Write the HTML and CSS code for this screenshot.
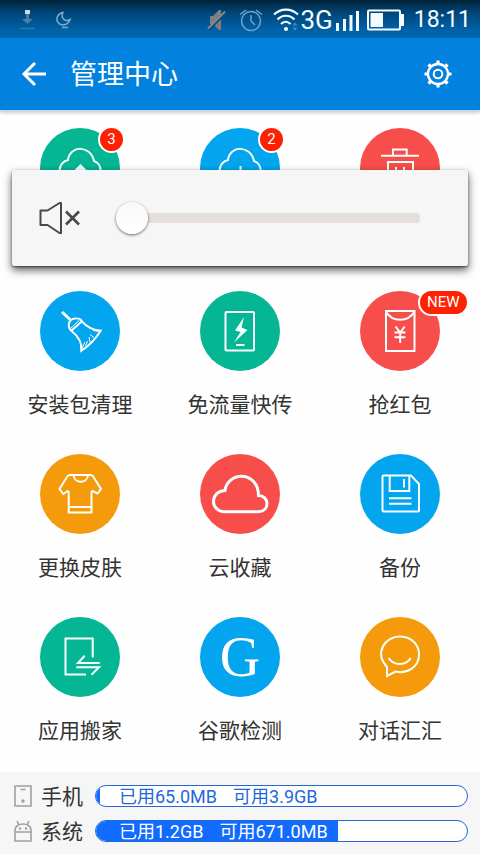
FILE: index.html
```html
<!DOCTYPE html>
<html lang="zh-CN">
<head>
<meta charset="utf-8">
<meta name="viewport" content="width=device-width, initial-scale=1">
<title>管理中心</title>
<link rel="stylesheet" href="styles.css">
</head>
<body>
<div class="status">
  <div class="status-left">
    <svg width="16" height="22" viewBox="0 0 16 22"><path d="M5 1h5v4H5z" fill="#c5dbe9"/><path d="M6 5h3v5h4l-5.500 5L2 10h4z" fill="#4680a6"/><path d="M0 19.500h15" stroke="#2379b2" stroke-width="1.500"/></svg>
    <svg width="16" height="22" viewBox="0 0 16 22" fill="none" stroke="#7fabca" stroke-width="1.500"><path d="M7 3.500C1.500 4.500-.5 10 2 13.500c3 4 10 3 12-3-4 2.500-10-.5-7-7zM6 18.500h6"/></svg>
  </div>
  <svg class="mute" width="20" height="24" viewBox="0 0 20 24"><path d="M3 8h3l6-6h2v20h-2l-6-6H3z" fill="#7d7f82"/><path d="M2 22L18.500 5.500" stroke="#064e86" stroke-width="2"/><path d="M1 20.500L18 3.500" stroke="#8b8987" stroke-width="1.800"/></svg>
  <svg class="alarm" width="24" height="24" viewBox="0 0 24 24" fill="none" stroke="#6fa3c9" stroke-width="1.500"><circle cx="12" cy="13" r="9.500"/><path d="M12 7v6l4 4M1 6.500L7 2M17 2l6 4.500"/></svg>
  <svg class="wifi" width="26" height="26" viewBox="0 0 26 26" fill="none" stroke="#f4fbff" stroke-width="2.200"><path d="M1 7.500C8 1 18 1 25 7.500M4.500 12.500c5-5 12-5 17 0M8 17c3-3 6.500-3 9.500 0"/><circle cx="13" cy="22" r="2" fill="#fff" stroke="none"/><path d="M19.500 18.500h5L22 15.500zM19.500 20.500h5L22 23.500z" fill="#4689b9" stroke="none"/></svg>
  <span class="network">3G</span>
  <svg class="signal" width="24" height="24" viewBox="0 0 24 24" fill="#f4fbff"><path d="M0 15h3v8H0zM7 11h3v12H7zM13.500 7h3v16h-3zM20 3h3v20h-3z"/></svg>
  <svg class="battery" width="38" height="22" viewBox="0 0 38 22"><rect x="1" y="1.500" width="32" height="19" rx="1" fill="none" stroke="#f4fbff" stroke-width="2"/><path d="M3.500 4H16v14H3.500zM34 5h3v12h-3z" fill="#f4fbff"/></svg>
  <time class="clock">18:11</time>
</div>

<header class="bar">
  <button class="icon-button" aria-label="返回"><svg width="26" height="26" viewBox="0 0 26 26" fill="none" stroke="#fff" stroke-width="3"><path d="M25 13H3M14 2L3 13l11 11"/></svg></button>
  <h1>管理中心</h1>
  <button class="icon-button" aria-label="设置"><svg width="28" height="28" viewBox="-14 -14 28 28" fill="none" stroke="#fff"><circle r="10" stroke-width="2.300"/><circle r="4.300" stroke-width="2"/><path stroke-width="3.200" d="M0-13.500v3M0 10.500v3M-13.500 0h3M10.500 0h3M-9.500-9.500l2 2M7.500 7.500l2 2M9.500-9.500l-2 2M-7.500 7.500l-2 2"/></svg></button>
</header>

<main class="grid">
  <button class="tile" aria-label="上传">
    <span class="disc green"><svg viewBox="0 0 80 80"><path d="M27 52c-10-1-10-18 1-20C30 17 51 17 54 33c9 3 9 18-1 19z"/><path class="solid" d="M40.500 36l7 7h-14z"/></svg><span class="badge">3</span></span>
  </button>
  <button class="tile" aria-label="下载">
    <span class="disc blue"><svg viewBox="0 0 80 80"><path d="M27 52c-10-1-10-18 1-20C30 17 51 17 54 33c9 3 9 18-1 19zM40.500 38v14"/></svg><span class="badge">2</span></span>
  </button>
  <button class="tile" aria-label="回收站">
    <span class="disc red"><svg viewBox="0 0 80 80"><path d="M21 27.700h38M33 27v-5.500h13.700V27M28 60V34h25v26zM36 39v15M44 39v15"/></svg></span>
  </button>

  <button class="tile">
    <span class="disc blue"><svg viewBox="0 0 80 80"><path class="thick" d="M22 21l8 7.500"/><path d="M31.300 39.700C27 35.500 28.500 29 33.500 27.700c4-.9 7.500.3 8.500 2.600zM42 30.300c4 5 10 8.500 18.700 9.400-5 8-11.500 15-19.400 20 1-8-3-14.500-10-20z"/><path class="fine" d="M31 37L39.500 29M42 57l3-6M45.500 55l2-5M50 51l-1-5M54 46.500l-4-3M59 40.500l-6-1"/></svg></span>
    <span class="label">安装包清理</span>
  </button>
  <button class="tile">
    <span class="disc green"><svg viewBox="0 0 80 80"><rect x="25.500" y="21" width="28.500" height="38.500" rx="1"/><path class="solid" d="M44 26l-9 13.500 5.500 1.500L34 51.500 47.500 39l-6-2.500z"/><path d="M36 54h8.500"/></svg></span>
    <span class="label">免流量快传</span>
  </button>
  <button class="tile">
    <span class="disc red"><svg viewBox="0 0 80 80"><path d="M26 20h28.500v40H26zM26 20.500c6 11 22 11 28.500 0M35.500 35.500l4.700 6 4.500-6M34.500 41.500h11M34.500 46.200h11M40.200 41v11"/></svg><span class="badge">NEW</span></span>
    <span class="label">抢红包</span>
  </button>

  <button class="tile">
    <span class="disc orange"><svg viewBox="0 0 80 80"><path d="M30 21h20.500q2 0 3 2L61 35l-3.500 4.500-5-2.500-1 1v20.500H28.700V38l-1-1-4.500 3L19.500 35 27 23q1-2 3-2zM33.500 21c1 9 13.500 9 14.500 0M29 53h22.500"/></svg></span>
    <span class="label">更换皮肤</span>
  </button>
  <button class="tile">
    <span class="disc red"><svg viewBox="0 0 80 80"><path class="thick" d="M24.500 57.700C18 57.700 13.500 53 13.500 47.500 13.500 41 18.500 36.700 25 36.500 26 28.500 33 22.300 41.500 22.300 51 22.300 58.500 30 58.500 41.500 63.500 41.500 67 45 67 49.500c0 5-3.500 8.200-9 8.200z"/></svg></span>
    <span class="label">云收藏</span>
  </button>
  <button class="tile">
    <span class="disc blue"><svg viewBox="0 0 80 80"><path d="M23.500 21.500H51l8 8.500v26.500q0 1-1 1H23.500q-1 0-1-1v-34q0-1 1-1zM29.700 21.500V37h19.600V21.500M44 25v8.500M29 44.300h22.500M29 49.700h22.500"/></svg></span>
    <span class="label">备份</span>
  </button>

  <button class="tile">
    <span class="disc green"><svg viewBox="0 0 80 80"><path d="M52.700 40.500V21.500H25.500v36h20.500M44.700 38.700L38 46h21.700M36.300 50.300H59l-7.500 7.400"/></svg></span>
    <span class="label">应用搬家</span>
  </button>
  <button class="tile">
    <span class="disc blue"><span class="letter">G</span></span>
    <span class="label">谷歌检测</span>
  </button>
  <button class="tile">
    <span class="disc orange"><svg viewBox="0 0 80 80"><path d="M27 59V50C14 36 25 19 40.300 19.500 53 20 59.500 29 59 38.500 58.500 50 47 57.500 35.500 54.500zM28.700 41c4.500 8 17.500 8 22 0"/></svg></span>
    <span class="label">对话汇汇</span>
  </button>
</main>

<footer class="storage">
  <div class="row">
    <svg width="18" height="22" viewBox="0 0 18 22" fill="none" stroke="#a0a0a0" stroke-width="1.600"><path d="M1 1h16v20H1zM6.500 4.500h5"/><circle cx="9" cy="16" r="1.700" fill="#a0a0a0" stroke="none"/></svg>
    <span class="name">手机</span>
    <div class="meter"><div class="fill" style="width:1%"></div><span class="usage"><span>已用65.0MB</span><span>可用3.9GB</span></span></div>
  </div>
  <div class="row">
    <svg width="18" height="22" viewBox="0 0 18 22" fill="none" stroke="#a0a0a0" stroke-width="1.600"><path d="M1 12v-2C1 2 17 2 17 10v11H1zM1 12h16M3 1l2 4M15 1l-2 4"/><circle cx="6" cy="8.500" r="1.200" fill="#a0a0a0" stroke="none"/><circle cx="12" cy="8.500" r="1.200" fill="#a0a0a0" stroke="none"/></svg>
    <span class="name">系统</span>
    <div class="meter"><div class="fill" style="width:65.3%"></div><span class="usage light"><span>已用1.2GB</span><span>可用671.0MB</span></span></div>
  </div>
</footer>

<div class="volume">
  <svg width="42" height="32" viewBox="0 0 42 32" fill="none" stroke="#484848" stroke-width="2" stroke-linejoin="round"><path d="M1.500 8.500h7l12-7.500h1.500v30h-1.500l-12-8h-7z"/><path d="M27 9.500l13 13M40 9.500l-13 13" stroke-width="2.600"/></svg>
  <input type="range" min="0" max="15" value="0" aria-label="音量">
</div>
</body>
</html>
```
FILE: styles.css
```css
* { box-sizing: border-box; }

body {
  margin: 0;
  min-height: 100vh;
  display: flex;
  flex-direction: column;
  position: relative;
  background: #fefefe;
  color: #333;
  font-family: Roboto, "Noto Sans CJK SC", sans-serif;
}

svg { display: block; flex: none; }

button {
  border: 0;
  padding: 0;
  background: none;
  color: inherit;
  font: inherit;
}

/* Status bar */
.status {
  height: 38px;
  padding: 2px 9px 0 20px;
  display: flex;
  align-items: center;
  background: linear-gradient(#002238, #00477b 35%, #0062a8 80%, #0066ae);
  color: #f4fbff;
}
.status-left { display: flex; gap: 20px; margin-right: auto; }
.alarm { margin-left: 12px; }
.wifi { margin-left: 10px; }
.network { margin-left: 1px; font-size: 26px; line-height: 36px; }
.signal { margin-left: 3px; }
.battery { margin-left: 7px; }
.clock { margin-left: 9px; font-size: 23px; line-height: 36px; }

/* Title bar */
.bar {
  height: 72px;
  padding: 0 28px 0 21px;
  display: flex;
  align-items: center;
  background: #0282de;
  box-shadow: 0 1px 0 #b5dcf5, 0 3px 3px #ccc;
  color: #fff;
}
.bar h1 {
  flex: 1;
  margin: 0 0 0 23px;
  padding-top: 2px;
  font-size: 27px;
  line-height: 40px;
  font-weight: 400;
}

/* Tools */
.grid {
  flex: 1;
  padding: 18px 0 26px;
  display: grid;
  grid-template-columns: repeat(3, 1fr);
  grid-auto-rows: 129px;
  row-gap: 34px;
  align-content: start;
}
.tile {
  display: flex;
  flex-direction: column;
  align-items: center;
  gap: 19px;
}
.disc {
  position: relative;
  width: 80px;
  height: 80px;
  border-radius: 50%;
}
.disc svg {
  fill: none;
  stroke: #f8ffff;
  stroke-width: 2;
}
.disc .thick { stroke-width: 3; }
.disc .fine { stroke-width: 1; }
.disc .solid { fill: #f8ffff; stroke: none; }
.green { background: #04b693; }
.blue { background: #02a5ee; }
.red { background: #f74d4b; }
.orange { background: #f59b0b; }
.label { font-size: 21px; line-height: 30px; }
.letter {
  display: block;
  color: #fff;
  font-family: "Liberation Serif", serif;
  font-size: 56px;
  line-height: 80px;
  text-align: center;
}
.badge {
  position: absolute;
  top: -2px;
  left: 58px;
  min-width: 27px;
  padding: 0 7px;
  border: 2px solid #fff;
  border-radius: 14px;
  background: #fe2102;
  color: #fff;
  font-size: 15px;
  line-height: 23px;
}

/* Storage */
.storage {
  padding: 10px 12px 9px 14px;
  display: grid;
  gap: 7px;
  background: #f6f6f6;
}
.row { display: flex; align-items: center; height: 28px; }
.name { margin: 0 12px 0 9px; padding-top: 2px; font-size: 21px; line-height: 28px; }
.meter {
  position: relative;
  flex: 1;
  height: 22px;
  border: 1px solid #2468d8;
  border-radius: 11px;
  background: #fff;
  overflow: hidden;
}
.fill { height: 100%; background: #126bff; }
.usage {
  position: absolute;
  inset: 0;
  padding-left: 23px;
  display: flex;
  gap: 16px;
  color: #2468d8;
  font-size: 18px;
  line-height: 22px;
  white-space: nowrap;
}
.light { color: #fff; }

/* Volume panel */
.volume {
  position: absolute;
  top: 170px;
  left: 12px;
  right: 12px;
  height: 96px;
  padding: 0 48px 0 27px;
  display: flex;
  align-items: center;
  gap: 35px;
  border-radius: 2px;
  background: #f6f6f6;
  box-shadow: 0 1px 2px rgba(0, 0, 0, .5), 0 4px 9px rgba(0, 0, 0, .65);
}
.volume input {
  flex: 1;
  min-width: 0;
  height: 32px;
  margin: 0;
  appearance: none;
  background: none;
}
.volume input::-webkit-slider-runnable-track {
  height: 10px;
  border-radius: 3px;
  background: #e5dedd;
}
.volume input::-webkit-slider-thumb {
  appearance: none;
  width: 32px;
  height: 32px;
  margin-top: -11px;
  border-radius: 50%;
  background: linear-gradient(#f8f8f8, #fff);
  box-shadow: 0 1px 3px rgba(0, 0, 0, .6);
}
```
